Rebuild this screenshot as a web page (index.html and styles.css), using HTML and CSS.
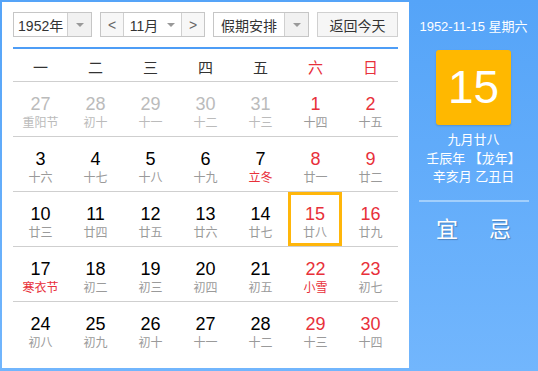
FILE: index.html
```html
<!DOCTYPE html>
<html lang="zh-CN">
<head>
  <meta charset="UTF-8">
  <title>万年历</title>
  <link rel="stylesheet" href="styles.css">
</head>
<body>

<div class="cal">
  <div class="main">
    <div class="toolbar">
      <div class="sel sel-year">
        <span class="sel-text">1952年</span>
        <span class="sel-arrow"><i class="tri"></i></span>
      </div>
      <div class="sel sel-month">
        <span class="nav">&lt;</span>
        <span class="sel-text">11月 <i class="tri"></i></span>
        <span class="nav">&gt;</span>
      </div>
      <div class="sel sel-holiday">
        <span class="sel-text">假期安排</span>
        <span class="sel-arrow"><i class="tri"></i></span>
      </div>
      <div class="btn-today">返回今天</div>
    </div>

    <div class="week-head">
      <span>一</span><span>二</span><span>三</span><span>四</span><span>五</span>
      <span class="red">六</span><span class="red">日</span>
    </div>

    <div class="weeks">
      <div class="week">
        <div class="day other"><b>27</b><small>重阳节</small></div>
        <div class="day other"><b>28</b><small>初十</small></div>
        <div class="day other"><b>29</b><small>十一</small></div>
        <div class="day other"><b>30</b><small>十二</small></div>
        <div class="day other"><b>31</b><small>十三</small></div>
        <div class="day red"><b>1</b><small>十四</small></div>
        <div class="day red"><b>2</b><small>十五</small></div>
      </div>
      <div class="week">
        <div class="day"><b>3</b><small>十六</small></div>
        <div class="day"><b>4</b><small>十七</small></div>
        <div class="day"><b>5</b><small>十八</small></div>
        <div class="day"><b>6</b><small>十九</small></div>
        <div class="day"><b>7</b><small class="fest">立冬</small></div>
        <div class="day red"><b>8</b><small>廿一</small></div>
        <div class="day red"><b>9</b><small>廿二</small></div>
      </div>
      <div class="week">
        <div class="day"><b>10</b><small>廿三</small></div>
        <div class="day"><b>11</b><small>廿四</small></div>
        <div class="day"><b>12</b><small>廿五</small></div>
        <div class="day"><b>13</b><small>廿六</small></div>
        <div class="day"><b>14</b><small>廿七</small></div>
        <div class="day red today"><b>15</b><small>廿八</small></div>
        <div class="day red"><b>16</b><small>廿九</small></div>
      </div>
      <div class="week">
        <div class="day"><b>17</b><small class="fest">寒衣节</small></div>
        <div class="day"><b>18</b><small>初二</small></div>
        <div class="day"><b>19</b><small>初三</small></div>
        <div class="day"><b>20</b><small>初四</small></div>
        <div class="day"><b>21</b><small>初五</small></div>
        <div class="day red"><b>22</b><small class="fest">小雪</small></div>
        <div class="day red"><b>23</b><small>初七</small></div>
      </div>
      <div class="week">
        <div class="day"><b>24</b><small>初八</small></div>
        <div class="day"><b>25</b><small>初九</small></div>
        <div class="day"><b>26</b><small>初十</small></div>
        <div class="day"><b>27</b><small>十一</small></div>
        <div class="day"><b>28</b><small>十二</small></div>
        <div class="day red"><b>29</b><small>十三</small></div>
        <div class="day red"><b>30</b><small>十四</small></div>
      </div>
    </div>
  </div>

  <div class="side">
    <div class="side-date">1952-11-15 星期六</div>
    <div class="big-day">15</div>
    <div class="lunar">
      <p>九月廿八</p>
      <p>壬辰年 【龙年】</p>
      <p>辛亥月 乙丑日</p>
    </div>
    <div class="side-line"></div>
    <div class="yiji">
      <span>宜</span><span>忌</span>
    </div>
  </div>
</div>

</body>
</html>
```

FILE: styles.css
```css
* {
  box-sizing: border-box;
}
body {
  margin: 0;
  font-family: Arial, "Liberation Sans", "Noto Sans CJK SC", sans-serif;
  color: #333;
}
.cal {
  width: 538px;
  height: 371px;
  display: flex;
  padding: 2px 0 3px 2px;
  background: linear-gradient(#55a4f8, #72b6fd);
}
.main {
  width: 407px;
  background: #fff;
  padding: 10px 11px 0;
}

/* toolbar */
.toolbar {
  display: flex;
  height: 25px;
  gap: 8px;
  font-size: 14px;
}
.sel {
  display: flex;
  border: 1px solid #c6c6c6;
  background: #fff;
  height: 25px;
}
.sel-text {
  display: flex;
  align-items: center;
  justify-content: center;
  color: #333;
}
.sel-arrow {
  display: flex;
  align-items: center;
  justify-content: center;
  width: 24px;
  border-left: 1px solid #d0d0d0;
  background: #f1f1f1;
}
.tri {
  display: inline-block;
  width: 0;
  height: 0;
  border-left: 4px solid transparent;
  border-right: 4px solid transparent;
  border-top: 4px solid #999;
}
.sel-year {
  width: 79px;
}
.sel-year .sel-text {
  width: 54px;
}
.sel-month {
  width: 105px;
}
.sel-month .sel-text {
  width: 59px;
  border-left: 1px solid #d0d0d0;
  border-right: 1px solid #d0d0d0;
  gap: 9px;
}
.nav {
  width: 22px;
  display: flex;
  align-items: center;
  justify-content: center;
  color: #666;
  background: #f7f7f7;
  font-size: 14px;
}
.sel-holiday {
  width: 96px;
}
.sel-holiday .sel-text {
  width: 70px;
}
.btn-today {
  width: 82px;
  height: 25px;
  border: 1px solid #d0d0d0;
  background: #f6f6f6;
  display: flex;
  align-items: center;
  justify-content: center;
  color: #333;
}

/* grid */
.week-head {
  margin-top: 10px;
  border-top: 2px solid #4e9df6;
  border-bottom: 1px solid #cfcfcf;
  height: 35px;
  display: grid;
  grid-template-columns: repeat(7, 55px);
  align-items: center;
  text-align: center;
  font-size: 15px;
  color: #333;
  padding-top: 2px;
}
.week-head .red {
  color: #e8303a;
}
.week {
  display: grid;
  grid-template-columns: repeat(7, 55px);
  height: 55px;
  border-bottom: 1px solid #cfcfcf;
}
.week:last-child {
  border-bottom: none;
}
.day {
  display: flex;
  flex-direction: column;
  align-items: center;
  padding-top: 11px;
}
.day b {
  font-weight: normal;
  font-size: 18px;
  line-height: 22px;
  color: #000;
}
.day small {
  font-size: 12px;
  line-height: 17px;
  color: #9a9a9a;
}
.day.red b {
  color: #e8303a;
}
.day.other b {
  color: #bbb;
}
.day.other small {
  color: #bbb;
}
.day small.fest {
  color: #e8303a;
}
.day.today {
  border: 3px solid #ffb60a;
  width: 54px;
  padding-top: 8px;
}

/* side panel */
.side {
  flex: 1;
  color: #fff;
  display: flex;
  flex-direction: column;
  align-items: center;
  padding-top: 16px;
}
.side-date {
  font-size: 13px;
  line-height: 18px;
}
.big-day {
  margin-top: 14px;
  width: 75px;
  height: 75px;
  background: #ffb800;
  border-radius: 3px;
  box-shadow: 0 1px 2px rgba(0, 0, 0, 0.15);
  font-size: 46px;
  line-height: 75px;
  text-align: center;
}
.lunar {
  margin-top: 6px;
  text-align: center;
  font-size: 13px;
  line-height: 18.5px;
}
.lunar p {
  margin: 0;
}
.side-line {
  margin-top: 13px;
  width: 110px;
  height: 2px;
  background: #a2cffc;
}
.yiji {
  margin-top: 15px;
  display: flex;
  gap: 31px;
  font-size: 22px;
  line-height: 26px;
  text-shadow: 1px 1px 1px rgba(0, 0, 0, 0.25);
}
```
